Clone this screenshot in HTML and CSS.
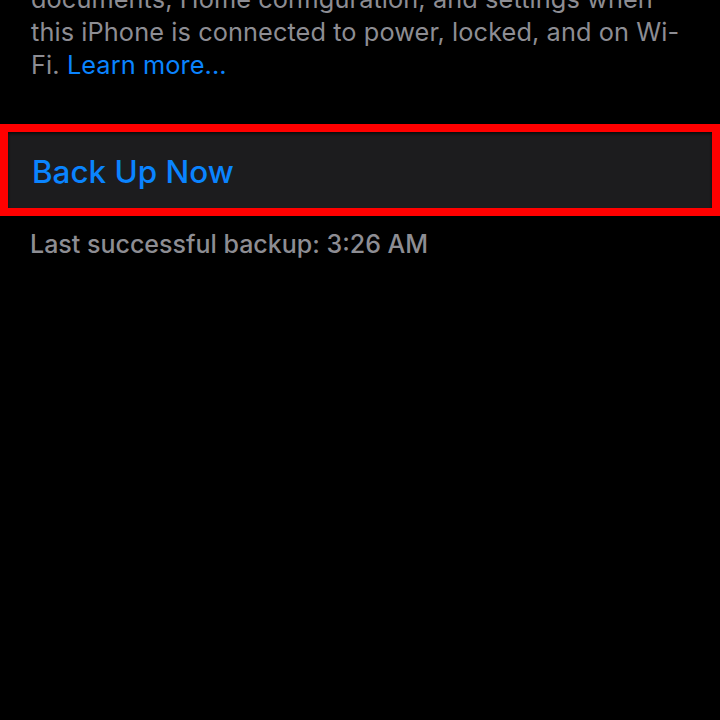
FILE: index.html
```html
<!DOCTYPE html>
<html lang="en">
<head>
<meta charset="utf-8">
<link rel="stylesheet" href="styles.css">
</head>
<body>
<main class="page">
  <p class="footer-note">documents, Home configuration, and settings when this iPhone is connected to power, locked, and on Wi-Fi. <a class="link" href="#">Learn more...</a></p>
  <div class="highlight">
    <div class="cell">
      <span class="action">Back Up Now</span>
    </div>
  </div>
  <p class="status">Last successful backup: 3:26 AM</p>
</main>
</body>
</html>
```
FILE: styles.css
```css
html, body {
  margin: 0;
  padding: 0;
  background: #000;
  height: 100%;
  overflow: hidden;
}
.page {
  font-family: Inter, "Noto Sans", sans-serif;
  display: flex;
  flex-direction: column;
}
.footer-note {
  margin: -18px 0 0 0;
  padding: 0 30px 0 31px;
  font-size: 25.3px;
  line-height: 33px;
  color: #8d8d93;
  letter-spacing: 0.1px;
}
.link {
  color: #0a84ff;
  text-decoration: none;
}
.highlight {
  margin-top: 43px;
  border: 8px solid #ff0000;
}
.cell {
  background: #1c1c1e;
  height: 76px;
  display: flex;
  align-items: center;
  padding-left: 24px;
  box-shadow: inset 0 2px 3px rgba(0,0,0,0.6);
}
.action {
  color: #0a84ff;
  font-size: 31.4px;
  font-weight: 500;
  padding-top: 4px;
}
.status {
  margin: 13px 0 0 0;
  padding-left: 30px;
  font-size: 25px;
  color: #8d8d93;
  font-weight: 500;
}
```
